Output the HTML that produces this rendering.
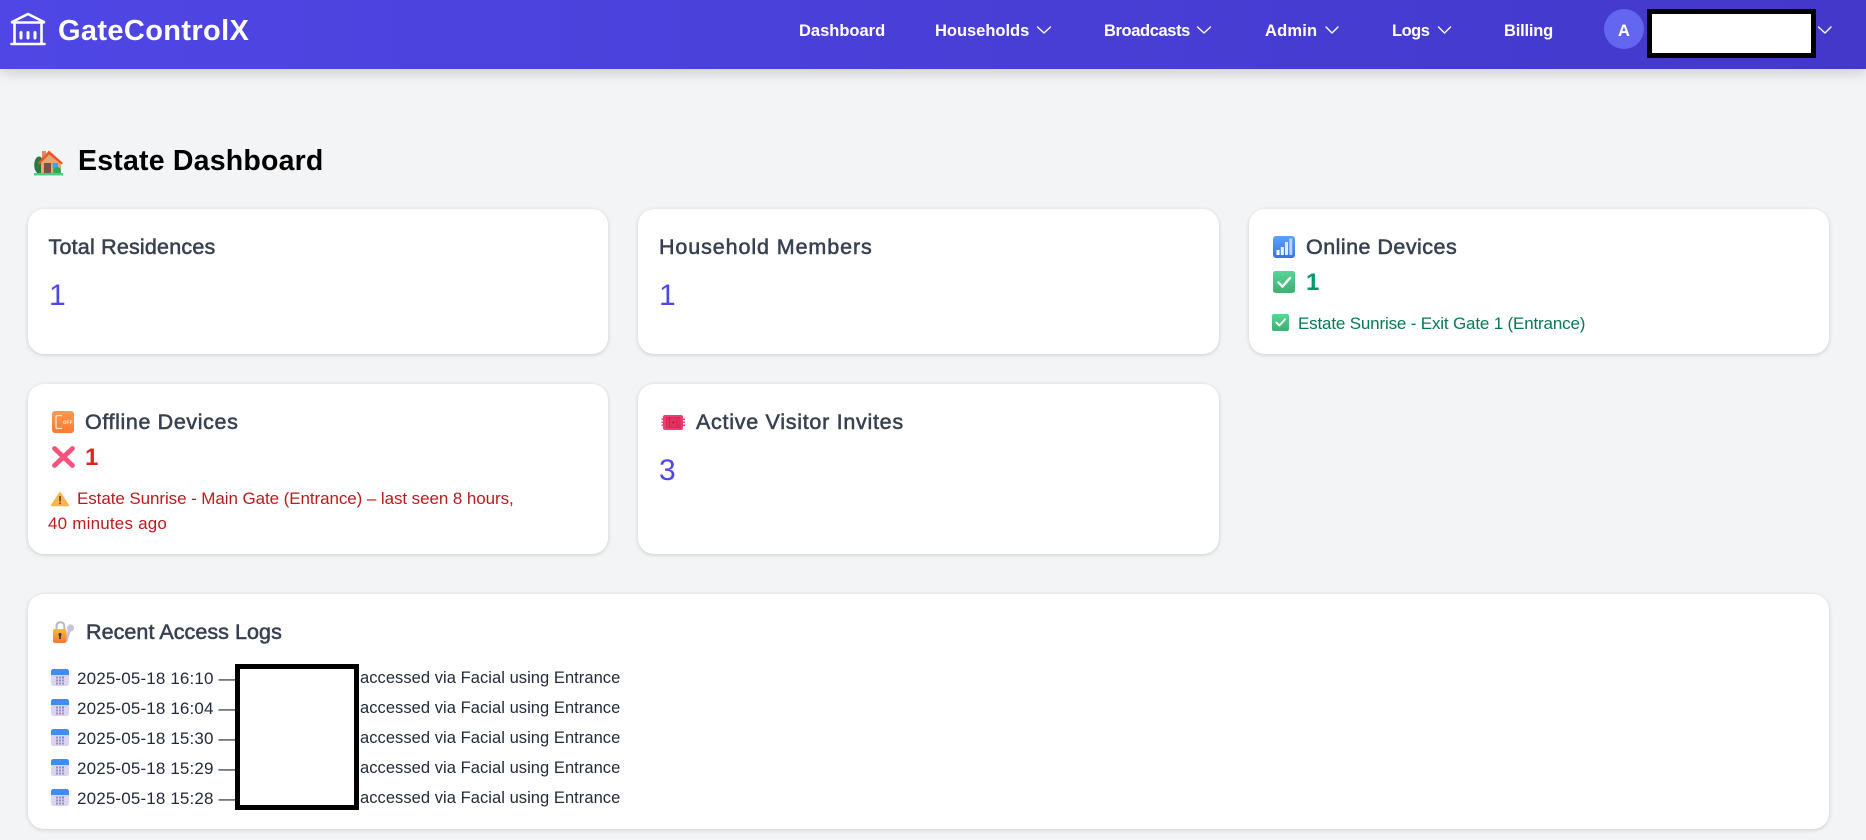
<!DOCTYPE html>
<html lang="en">
<head>
<meta charset="utf-8">
<title>GateControlX - Estate Dashboard</title>
<style>
*{box-sizing:border-box;margin:0;padding:0}
html,body{width:1866px;height:840px;overflow:hidden;background:#f3f4f6}
body{position:relative;font-family:"Liberation Sans",Arial,sans-serif}
header{position:absolute;left:0;top:0;width:1866px;height:69px;background:linear-gradient(90deg,#4f46e5,#4338ca);box-shadow:0 4px 12px rgba(0,0,0,.16)}
.t{position:absolute;white-space:nowrap;line-height:1}
.logo{font-size:29px;font-weight:700;color:#fff;letter-spacing:.36px}
.nav{font-size:16.5px;font-weight:700;color:#fff;top:23px}
.avatar{position:absolute;left:1604px;top:9px;width:40px;height:40px;border-radius:50%;background:#6366f1}
.red{position:absolute;background:#fff;border:5px solid #000}
.card{position:absolute;background:#fff;border-radius:16px;box-shadow:0 1px 4px rgba(0,0,0,.16)}
h1.t{font-size:28.5px;font-weight:700;color:#000;letter-spacing:.2px}
h2.t{font-size:21.5px;font-weight:400;color:#374151;-webkit-text-stroke:.55px #374151}
.num{font-size:30px;color:#4f46e5}
.cnt{font-size:24px;font-weight:700}
.s{font-size:17px}
.g{color:#047857}
.r{color:#b91c1c}
.log{font-size:17px;color:#1f2937}
.d{letter-spacing:.15px}
.a{font-size:16.5px;letter-spacing:.05px}
svg.icons{position:absolute;left:0;top:0;z-index:5;pointer-events:none}
</style>
</head>
<body>
<header>
  <div class="t logo" style="left:58px;top:17px">GateControlX</div>
  <nav>
    <span class="t nav" style="left:799px">Dashboard</span>
    <span class="t nav" style="left:935px;letter-spacing:-.02px">Households</span>
    <span class="t nav" style="left:1104px;letter-spacing:-.39px">Broadcasts</span>
    <span class="t nav" style="left:1265px;letter-spacing:.2px">Admin</span>
    <span class="t nav" style="left:1392px;letter-spacing:-.5px">Logs</span>
    <span class="t nav" style="left:1504px;letter-spacing:-.2px">Billing</span>
  </nav>
  <div class="avatar"></div>
  <span class="t nav" style="left:1618px">A</span>
  <div class="red" style="left:1647px;top:9px;width:169px;height:49px"></div>
</header>

<main>
  <h1 class="t" style="left:78px;top:147px">Estate Dashboard</h1>

  <section class="card" style="left:28px;top:209px;width:580px;height:145px"></section>
  <h2 class="t" style="left:48.5px;top:237px;letter-spacing:.2px">Total Residences</h2>
  <div class="t num" style="left:49px;top:281px">1</div>

  <section class="card" style="left:638px;top:209px;width:581px;height:145px"></section>
  <h2 class="t" style="left:659px;top:237px;letter-spacing:.9px">Household Members</h2>
  <div class="t num" style="left:659px;top:281px">1</div>

  <section class="card" style="left:1249px;top:209px;width:580px;height:145px"></section>
  <h2 class="t" style="left:1306px;top:237px;letter-spacing:.47px">Online Devices</h2>
  <div class="t cnt" style="left:1306px;top:271px;color:#059669">1</div>
  <div class="t s g" style="left:1298px;top:315px;letter-spacing:-.17px">Estate Sunrise - Exit Gate 1 (Entrance)</div>

  <section class="card" style="left:28px;top:384px;width:580px;height:170px"></section>
  <h2 class="t" style="left:85px;top:412px;letter-spacing:.62px">Offline Devices</h2>
  <div class="t cnt" style="left:85px;top:446px;color:#dc2626">1</div>
  <div class="t s r" style="left:77px;top:490px;letter-spacing:-.08px">Estate Sunrise - Main Gate (Entrance) – last seen 8 hours,</div>
  <div class="t s r" style="left:48px;top:515px;letter-spacing:.2px">40 minutes ago</div>

  <section class="card" style="left:638px;top:384px;width:581px;height:170px"></section>
  <h2 class="t" style="left:696px;top:412px;letter-spacing:.72px">Active Visitor Invites</h2>
  <div class="t num" style="left:659px;top:456px">3</div>

  <section class="card" style="left:28px;top:594px;width:1801px;height:235px"></section>
  <h2 class="t" style="left:86px;top:622px;letter-spacing:.06px">Recent Access Logs</h2>

  <div class="t log d" style="left:77px;top:670px">2025-05-18 16:10 —</div>
  <div class="t log d" style="left:77px;top:700px">2025-05-18 16:04 —</div>
  <div class="t log d" style="left:77px;top:730px">2025-05-18 15:30 —</div>
  <div class="t log d" style="left:77px;top:760px">2025-05-18 15:29 —</div>
  <div class="t log d" style="left:77px;top:790px">2025-05-18 15:28 —</div>

  <div class="t log a" style="left:360px;top:670px">accessed via Facial using Entrance</div>
  <div class="t log a" style="left:360px;top:700px">accessed via Facial using Entrance</div>
  <div class="t log a" style="left:360px;top:730px">accessed via Facial using Entrance</div>
  <div class="t log a" style="left:360px;top:760px">accessed via Facial using Entrance</div>
  <div class="t log a" style="left:360px;top:790px">accessed via Facial using Entrance</div>

  <div class="red" style="left:235px;top:664px;width:124px;height:146px;z-index:3"></div>
</main>

<svg class="icons" width="1866" height="840" viewBox="0 0 1866 840" xmlns="http://www.w3.org/2000/svg">
  <defs>
    <linearGradient id="lockG" x1="0" y1="0" x2="0" y2="1"><stop offset="0" stop-color="#f9bd33"/><stop offset="1" stop-color="#f5763c"/></linearGradient>
    <linearGradient id="offG" x1="0" y1="0" x2="0" y2="1"><stop offset="0" stop-color="#ff9a50"/><stop offset="1" stop-color="#fb7a30"/></linearGradient>
    <linearGradient id="sigG" x1="0" y1="0" x2="0" y2="1"><stop offset="0" stop-color="#5aa2f8"/><stop offset="1" stop-color="#3c72e2"/></linearGradient>
    <linearGradient id="chkG" x1="0" y1="0" x2="0" y2="1"><stop offset="0" stop-color="#58d695"/><stop offset="1" stop-color="#3fae72"/></linearGradient>
    <g id="cal">
      <rect x="0" y="0" width="18" height="17" rx="2.5" fill="#dcd4ef"/>
      <path d="M0 6V2.5A2.5 2.5 0 0 1 2.5 0h13A2.5 2.5 0 0 1 18 2.5V6z" fill="#3f8cf5"/>
      <g fill="#9a8fc0">
        <rect x="5" y="7.5" width="2" height="2"/><rect x="8" y="7.5" width="2" height="2"/><rect x="11" y="7.5" width="2" height="2" fill="#4f94f5"/>
        <rect x="5" y="10.5" width="2" height="2"/><rect x="8" y="10.5" width="2" height="2"/><rect x="11" y="10.5" width="2" height="2"/>
        <rect x="5" y="13.5" width="2" height="2"/><rect x="8" y="13.5" width="2" height="2"/><rect x="11" y="13.5" width="2" height="2"/>
      </g>
    </g>
  </defs>

  <!-- logo -->
  <g fill="none" stroke="#fff" stroke-width="2.6" stroke-linecap="round" stroke-linejoin="round">
    <path d="M12 22L28 14L44 22"/>
    <path d="M12.5 22.5H43.5"/>
    <path d="M14.5 23V43.5M41.5 23V43.5"/>
    <path d="M11.5 44H44.5"/>
  </g>
  <g fill="none" stroke="#fff" stroke-width="3" stroke-linecap="round">
    <path d="M21 32.5V38M28 32.5V38M35 32.5V38"/>
  </g>

  <!-- nav chevrons -->
  <g fill="none" stroke="#fff" stroke-width="1.4" stroke-linecap="round" stroke-linejoin="round">
    <path d="M1037.5 27L1044 33L1050.5 27"/>
    <path d="M1197.5 27L1204 33L1210.5 27"/>
    <path d="M1326 27L1332 33L1338 27"/>
    <path d="M1438.5 27L1444.5 33L1450.5 27"/>
    <path d="M1818.5 27L1825 33L1831 27"/>
  </g>

  <!-- house -->
  <rect x="42" y="151" width="4" height="8" fill="#d98f64"/>
  <ellipse cx="39" cy="165" rx="4.8" ry="8.5" fill="#2c7a3f"/>
  <path d="M41 161L50 153L61 161V173H41z" fill="#e4a877"/>
  <path d="M38.5 163L49 151L62.5 163L61.5 164L49 154L39.5 164z" fill="#f0562c" stroke="#f0562c" stroke-width=".7" stroke-linejoin="round"/>
  <rect x="44" y="163" width="7" height="10" fill="#7d4f45"/>
  <rect x="52.5" y="163" width="5.5" height="5.5" fill="#39a8ee"/>
  <circle cx="57" cy="171" r="4" fill="#2fa85f"/>
  <rect x="34" y="173" width="29" height="2.4" fill="#3fd37a"/>

  <!-- signal -->
  <rect x="1273" y="236" width="22" height="22" rx="3" fill="url(#sigG)"/>
  <rect x="1276.5" y="250" width="3" height="5" fill="#fff"/>
  <rect x="1280.8" y="247" width="3" height="8" fill="#fff" opacity=".9"/>
  <rect x="1285" y="242" width="3" height="13" fill="#e0ecff"/>
  <rect x="1289.3" y="238.5" width="3" height="16.5" fill="#bcd5fb"/>

  <!-- check big -->
  <rect x="1273" y="271" width="22" height="22" rx="2.5" fill="url(#chkG)"/>
  <path d="M1278.5 282.5L1282.5 286.5L1290 278" fill="none" stroke="#fff" stroke-width="2.4" stroke-linecap="round" stroke-linejoin="round"/>

  <!-- check small -->
  <rect x="1272" y="314" width="17" height="17" rx="2" fill="url(#chkG)"/>
  <path d="M1276.3 322.5L1279.5 325.5L1285 319.3" fill="none" stroke="#fff" stroke-width="1.9" stroke-linecap="round" stroke-linejoin="round"/>

  <!-- offline -->
  <rect x="52" y="411" width="22" height="22" rx="3" fill="url(#offG)"/>
  <path d="M62 415.5H57.5Q56 415.5 56 417V427Q56 428.5 57.5 428.5H62" fill="none" stroke="#ffe6d2" stroke-width="1.3"/>
  <text x="63" y="424" font-family="Liberation Mono, monospace" font-size="5.4" font-weight="700" fill="#ffe6d2">OFF</text>

  <!-- x -->
  <path d="M54.5 448.5L72.5 465.5M72.5 448.5L54.5 465.5" fill="none" stroke="#f7527a" stroke-width="4.8" stroke-linecap="round"/>

  <!-- warning -->
  <path d="M60 492.5L68.5 505.5H51.5z" fill="#f9b44e" stroke="#f9b44e" stroke-width="1.4" stroke-linejoin="round"/>
  <rect x="59.2" y="496" width="1.7" height="5.5" fill="#6a4a2a"/>
  <rect x="59.2" y="502.5" width="1.7" height="1.7" fill="#6a4a2a"/>

  <!-- ticket -->
  <path d="M665 415H681Q683 415 683 417V418.5H685V420H683V421.5H685V423H683V424.5H685V426H683V428Q683 430 681 430H665Q663 430 663 428V426H661.5V424.5H663V423H661.5V421.5H663V420H661.5V418.5H663V417Q663 415 665 415z" fill="#f33b72"/>
  <rect x="666.5" y="417.5" width="13.5" height="10" fill="#e8305f" stroke="#c4264f" stroke-width=".7"/>
  <path d="M669.5 418V427M677 418V427" stroke="#b8264c" stroke-width=".8"/>
  <circle cx="673.3" cy="422.5" r="1.1" fill="#a0203f"/>

  <!-- lock -->
  <path d="M56.5 630V626A3.9 3.9 0 0 1 64.3 626V630" fill="none" stroke="#b8b4c8" stroke-width="2"/>
  <circle cx="70.5" cy="628" r="3.6" fill="#c9c3dc"/>
  <path d="M69 631L66.5 640" stroke="#c9c3dc" stroke-width="3" stroke-linecap="round"/>
  <rect x="53" y="629" width="13.5" height="14" rx="2" fill="url(#lockG)"/>
  <circle cx="60" cy="634.5" r="1.5" fill="#333"/>
  <rect x="59.2" y="635" width="1.6" height="4" fill="#333"/>

  <!-- calendars -->
  <use href="#cal" x="51" y="669"/>
  <use href="#cal" x="51" y="699"/>
  <use href="#cal" x="51" y="729"/>
  <use href="#cal" x="51" y="759"/>
  <use href="#cal" x="51" y="789"/>
</svg>
</body>
</html>
